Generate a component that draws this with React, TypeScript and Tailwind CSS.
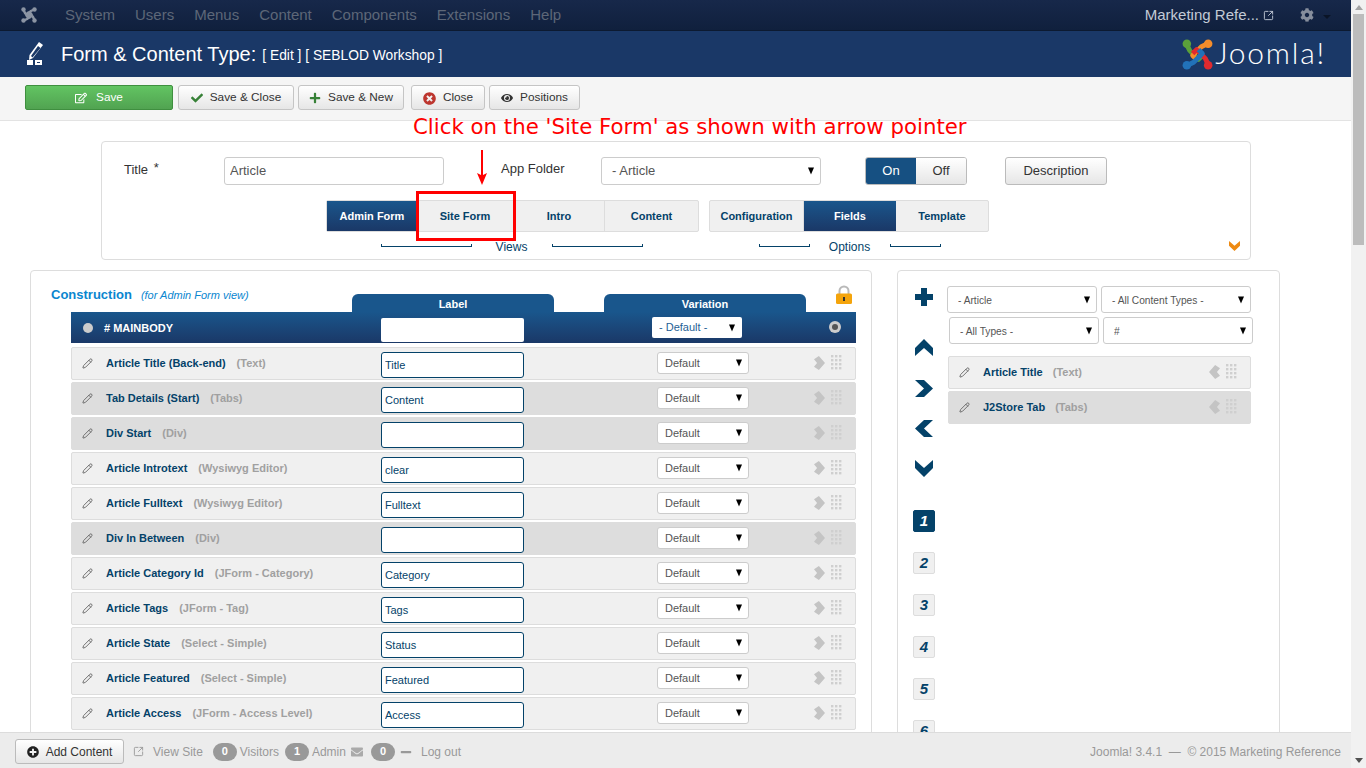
import type { ReactNode } from 'react';
import { FaCheck, FaCog, FaEnvelope, FaEye, FaMinus, FaPlus, FaPlusCircle, FaRegEdit, FaTimesCircle } from 'react-icons/fa';
import { LuPencil, LuSquareArrowOutUpRight } from 'react-icons/lu';

const menu = ['System', 'Users', 'Menus', 'Content', 'Components', 'Extensions', 'Help'];

const rows = [
    { name: 'Article Title (Back-end)', type: '(Text)', label: 'Title' },
    { name: 'Tab Details (Start)', type: '(Tabs)', label: 'Content', dark: true },
    { name: 'Div Start', type: '(Div)', label: '', dark: true },
    { name: 'Article Introtext', type: '(Wysiwyg Editor)', label: 'clear' },
    { name: 'Article Fulltext', type: '(Wysiwyg Editor)', label: 'Fulltext' },
    { name: 'Div In Between', type: '(Div)', label: '', dark: true },
    { name: 'Article Category Id', type: '(JForm - Category)', label: 'Category' },
    { name: 'Article Tags', type: '(JForm - Tag)', label: 'Tags' },
    { name: 'Article State', type: '(Select - Simple)', label: 'Status' },
    { name: 'Article Featured', type: '(Select - Simple)', label: 'Featured' },
    { name: 'Article Access', type: '(JForm - Access Level)', label: 'Access' },
];

function JoomlaMark({ size, colors }: { size: number; colors: string[] }) {
    const [green, orange, red, blue] = colors;
    return (
        <svg width={size} height={size} viewBox="0 0 32 32" fill="none" strokeWidth="5" strokeLinejoin="round">
            <path d="M4 4 L8 12 L17 21 L21 17" stroke={green} />
            <circle cx="5" cy="5" r="4.4" fill={green} />
            <path d="M28 4 L20 8 L11 17 L15 21" stroke={orange} />
            <circle cx="27" cy="5" r="4.4" fill={orange} />
            <path d="M28 28 L24 20 L15 11 L11 15" stroke={red} />
            <circle cx="27" cy="27" r="4.4" fill={red} />
            <path d="M4 28 L12 24 L21 15 L17 11" stroke={blue} />
            <circle cx="5" cy="27" r="4.4" fill={blue} />
        </svg>
    );
}

function Chevron({ dir, className }: { dir: 'up' | 'down' | 'left' | 'right'; className: string }) {
    const points = {
        up: '9,0 18,9 18,17 9,9 0,17 0,9',
        down: '9,17 18,8 18,0 9,8 0,0 0,8',
        left: '0,8.5 9,0 18,0 9,8.5 18,17 9,17',
        right: '18,8.5 9,0 0,0 9,8.5 0,17 9,17',
    }[dir];
    return (
        <svg className={className} viewBox="0 0 18 17" preserveAspectRatio="none" fill="currentColor">
            <polygon points={points} />
        </svg>
    );
}

function MoveArrow({ dir, className }: { dir: 'left' | 'right'; className: string }) {
    const points = dir === 'right' ? '18,8.5 8,0 0,4 5,8.5 0,13 8,17' : '0,8.5 10,0 18,4 13,8.5 18,13 10,17';
    return (
        <svg className={className} viewBox="0 0 18 17" preserveAspectRatio="none" fill="#c4c4c4">
            <polygon points={points} />
        </svg>
    );
}

function Select({ value, className, selectClassName }: { value: string; className: string; selectClassName: string }) {
    return (
        <div className={`relative shrink-0 ${className}`}>
            <select className={`block w-full appearance-none bg-white ${selectClassName}`}>
                <option>{value}</option>
            </select>
            <span className="pointer-events-none absolute right-[7px] top-1/2 h-0 w-0 -translate-y-1/2 border-x-[3.5px] border-t-[7px] border-x-transparent border-t-black" />
        </div>
    );
}

function ToolButton({ icon, children, className = '' }: { icon: ReactNode; children: ReactNode; className?: string }) {
    return (
        <button
            type="button"
            className={`flex h-[25px] items-center justify-center gap-[7px] rounded-[3px] border border-[#c5c5c5] bg-gradient-to-b from-white to-[#e6e6e6] pt-[1px] text-[11.8px] text-[#333] ${className}`}
        >
            {icon}
            {children}
        </button>
    );
}

function Bracket({ width }: { width: string }) {
    return <div className={`mb-[3px] h-[3px] border-x border-b border-[#044269] ${width}`} />;
}

function TabItem({ active, width, children }: { active?: boolean; width: string; children: ReactNode }) {
    return (
        <div
            className={`flex h-full items-center justify-center text-[11px] font-bold ${width} ${
                active ? 'bg-gradient-to-b from-[#19568c] to-[#1a3867] text-white' : 'border-r border-[#ddd] text-[#044269] last:border-r-0'
            }`}
        >
            {children}
        </div>
    );
}

function GripDots() {
    const dots = [];
    for (let y = 0; y < 4; y++) {
        for (let x = 0; x < 3; x++) {
            dots.push(<rect key={`${x}-${y}`} x={x * 4} y={y * 4} width="2.4" height="2.4" fill="#cfcfcf" />);
        }
    }
    return (
        <svg width="11" height="15" viewBox="0 0 11 15">
            {dots}
        </svg>
    );
}

function FieldRow({ name, type, label, dark }: { name: string; type: string; label: string; dark?: boolean }) {
    return (
        <div className={`mb-[2px] flex h-[33px] w-[785px] items-center rounded-[2px] border border-[#ddd] ${dark ? 'bg-[#dddddd]' : 'bg-[#f0f0f0]'}`}>
            <div className="flex w-[309px] items-center whitespace-nowrap text-[11px] font-bold">
                <LuPencil className="ml-[10px] h-[11px] w-[11px] text-[#666]" />
                <span className="ml-[13px] text-[#044269]">{name}</span>
                <span className="ml-[11px] text-[#a0a0a0]">{type}</span>
            </div>
            <input
                readOnly
                value={label}
                className="mt-[2px] h-[26px] w-[143px] rounded-[3px] border border-[#044269] bg-white px-[3px] text-[11px] text-[#044269] outline-none"
            />
            <Select
                value="Default"
                className="mb-[1px] ml-[133px] w-[92px]"
                selectClassName="h-[22px] rounded-[3px] border border-[#ccc] pl-[7px] text-[11px] text-[#555]"
            />
            <MoveArrow dir="right" className="mb-[1px] ml-[65px] h-[14px] w-[11px]" />
            <div className="mb-[2px] ml-[6px]">
                <GripDots />
            </div>
        </div>
    );
}

function LibraryItem({ name, type, dark }: { name: string; type: string; dark?: boolean }) {
    return (
        <div className={`mb-[2px] flex h-[33px] w-[303px] items-center rounded-[2px] border border-[#ddd] ${dark ? 'bg-[#dddddd]' : 'bg-[#f0f0f0]'}`}>
            <LuPencil className="ml-[10px] h-[11px] w-[11px] text-[#666]" />
            <span className="ml-[13px] whitespace-nowrap text-[11px] font-bold text-[#044269]">{name}</span>
            <span className="ml-[10px] whitespace-nowrap text-[11px] font-bold text-[#a0a0a0]">{type}</span>
            <MoveArrow dir="left" className="mb-[1px] ml-auto h-[14px] w-[11px]" />
            <div className="mb-[2px] ml-[6px] mr-[13px]">
                <GripDots />
            </div>
        </div>
    );
}

function FilterSelect({ value }: { value: string }) {
    return (
        <Select
            value={value}
            className="w-[150px]"
            selectClassName="h-[27px] rounded-[3px] border border-[#ccc] pl-[10px] pt-[2px] text-[10.2px] text-[#555]"
        />
    );
}

function Badge({ children }: { children: ReactNode }) {
    return (
        <span className="flex h-[18px] w-[24px] items-center justify-center rounded-full bg-[#999] text-[11px] font-bold text-white">{children}</span>
    );
}

export default function App() {
    return (
        <div className="relative flex h-screen w-[1366px] overflow-hidden bg-white font-['Liberation_Sans',Arial,sans-serif]">
            <div className="flex min-w-0 flex-1 flex-col">
                <div className="flex h-[31px] shrink-0 items-center border-b border-[#0c1a31] bg-gradient-to-b from-[#17284a] to-[#10203d]">
                    <div className="mb-[1px] ml-[21px] mr-[28px]">
                        <JoomlaMark size={16} colors={['#8b94a3', '#8b94a3', '#8b94a3', '#8b94a3']} />
                    </div>
                    <div className="flex gap-[20px] pt-[1px] text-[15px] text-[#5d6778]">
                        {menu.map((item) => (
                            <span key={item}>{item}</span>
                        ))}
                    </div>
                    <div className="ml-auto flex items-center pt-[1px] text-[15px] text-[#c3cbd6]">
                        <span>Marketing Refe...</span>
                        <LuSquareArrowOutUpRight className="ml-[4px] h-[11px] w-[11px]" />
                        <FaCog className="mb-[2px] ml-[26px] h-[14px] w-[14px] text-[#868e9c]" />
                        <span className="ml-[9px] mr-[20px] mt-[2px] h-0 w-0 border-x-[4px] border-t-[4px] border-x-transparent border-t-[#0a1426]" />
                    </div>
                </div>

                <div className="flex h-[46px] shrink-0 items-center bg-[#1a3867]">
                    <svg className="ml-[26px] mr-[17px]" width="18" height="24" viewBox="0 0 18 24" fill="white">
                        <path d="M13 0 L17 3 L7 16 L3 18 L3.5 13 Z" />
                        <path d="M12 4 L14.5 6 L6.5 15.5 L5 14 Z" fill="#1a3867" />
                        <rect x="1" y="18" width="6" height="5" />
                        <rect x="9" y="18" width="7" height="5" />
                        <rect x="11" y="20" width="3" height="1" fill="#1a3867" />
                    </svg>
                    <span className="whitespace-nowrap text-[20px] text-white">Form &amp; Content Type:</span>
                    <span className="ml-[6px] mt-[5px] whitespace-nowrap text-[13.8px] text-white">[ Edit ] [ SEBLOD Workshop ]</span>
                    <div className="ml-auto mr-[25px] flex items-center">
                        <JoomlaMark size={31} colors={['#5ba13a', '#f58d2b', '#e12a2f', '#2272b9']} />
                        <span className="mb-[4px] ml-[2px] font-['Lato',sans-serif] text-[30px] font-light leading-none tracking-[1.8px] text-white">Joomla!</span>
                    </div>
                </div>

                <div className="flex h-[44px] shrink-0 items-start border-b border-[#e3e3e3] bg-[#f5f5f5] pl-[25px] pt-[8px]">
                    <button
                        type="button"
                        className="flex h-[25px] w-[148px] items-center justify-center gap-[9px] rounded-[2px] border border-[#3f8f3f] bg-gradient-to-b from-[#62c462] to-[#51a351] pt-[1px] text-[11.8px] text-white"
                    >
                        <FaRegEdit className="h-[12px] w-[12px]" />
                        Save
                    </button>
                    <ToolButton className="ml-[5px] w-[116px]" icon={<FaCheck className="h-[12px] w-[12px] text-[#378137]" />}>
                        Save &amp; Close
                    </ToolButton>
                    <ToolButton className="ml-[4px] w-[106px]" icon={<FaPlus className="h-[12px] w-[12px] text-[#378137]" />}>
                        Save &amp; New
                    </ToolButton>
                    <ToolButton className="ml-[7px] w-[74px]" icon={<FaTimesCircle className="h-[13px] w-[13px] text-[#bd362f]" />}>
                        Close
                    </ToolButton>
                    <ToolButton className="ml-[4px] w-[91px]" icon={<FaEye className="h-[12px] w-[12px] text-[#333]" />}>
                        Positions
                    </ToolButton>
                </div>

                <div className="min-h-0 flex-1 overflow-hidden">
                    <div className="relative ml-[101px] mt-[20px] h-[119px] w-[1150px] rounded-[4px] border border-[#ddd]">
                        <div className="mt-[15px] flex h-[28px] items-center">
                            <span className="mb-[3px] ml-[22px] w-[100px] text-[13px] text-[#333]">
                                Title <span className="relative -top-[2px] ml-[2px]">*</span>
                            </span>
                            <input
                                readOnly
                                value="Article"
                                className="h-[28px] w-[220px] rounded-[3px] border border-[#ccc] bg-white px-[5px] pb-[1px] text-[13px] text-[#555] outline-none"
                            />
                            <span className="mb-[4px] ml-[57px] w-[100px] text-[13px] text-[#333]">App Folder</span>
                            <Select
                                value="- Article"
                                className="w-[220px]"
                                selectClassName="h-[28px] rounded-[3px] border border-[#ccc] pl-[10px] text-[13px] text-[#555]"
                            />
                            <div className="ml-[44px] flex h-[28px] w-[102px] overflow-hidden rounded-[3px] border border-[#bbb] text-[13px]">
                                <span className="flex w-[50px] items-center justify-center bg-[#165082] text-white">On</span>
                                <span className="flex flex-1 items-center justify-center bg-gradient-to-b from-white to-[#e6e6e6] text-[#333]">Off</span>
                            </div>
                            <button
                                type="button"
                                className="ml-[38px] h-[28px] w-[102px] rounded-[3px] border border-[#bbb] bg-gradient-to-b from-white to-[#e6e6e6] text-[13px] text-[#333]"
                            >
                                Description
                            </button>
                        </div>
                        <div className="ml-[224px] mt-[15px] flex gap-[10px]">
                            <div className="w-[373px]">
                                <div className="flex h-[32px] rounded-[2px] border border-[#ddd] bg-[#f0f0f0]">
                                    <TabItem active width="w-[90px]">Admin Form</TabItem>
                                    <TabItem width="w-[97px]">Site Form</TabItem>
                                    <TabItem width="w-[91px]">Intro</TabItem>
                                    <TabItem width="w-[93px]">Content</TabItem>
                                </div>
                                <div className="mt-[7px] flex items-center justify-center pr-[2px]">
                                    <Bracket width="w-[91px]" />
                                    <span className="w-[80px] pt-[1px] text-center text-[12px] leading-[14px] text-[#044269]">Views</span>
                                    <Bracket width="w-[91px]" />
                                </div>
                            </div>
                            <div className="w-[280px]">
                                <div className="flex h-[32px] rounded-[2px] border border-[#ddd] bg-[#f0f0f0]">
                                    <TabItem width="w-[94px]">Configuration</TabItem>
                                    <TabItem active width="w-[92px]">Fields</TabItem>
                                    <TabItem width="w-[92px]">Template</TabItem>
                                </div>
                                <div className="mt-[7px] flex items-center justify-center pl-[1px]">
                                    <Bracket width="w-[51px]" />
                                    <span className="w-[80px] pt-[1px] text-center text-[12px] leading-[14px] text-[#044269]">Options</span>
                                    <Bracket width="w-[51px]" />
                                </div>
                            </div>
                        </div>
                        <Chevron dir="down" className="absolute bottom-[8px] right-[10px] h-[10px] w-[11px] text-[#ee8a12]" />
                    </div>

                    <div className="ml-[30px] mt-[10px] flex gap-[25px]">
                        <div className="h-[520px] w-[842px] rounded-[4px] border border-[#ddd]">
                            <div className="flex h-[41px] items-end">
                                <div className="mb-[6px] ml-[20px] w-[301px] whitespace-nowrap">
                                    <span className="text-[13px] font-bold text-[#0a86cf]">Construction</span>
                                    <span className="ml-[9px] text-[11px] italic text-[#0a86cf]">(for Admin Form view)</span>
                                </div>
                                <div className="flex h-[18px] w-[202px] items-center justify-center rounded-t-[6px] bg-[#19568c] pt-[2px] text-[11px] font-bold text-white">Label</div>
                                <div className="ml-[50px] flex h-[18px] w-[202px] items-center justify-center rounded-t-[6px] bg-[#19568c] pt-[2px] text-[11px] font-bold text-white">Variation</div>
                                <svg className="mb-[7px] ml-[29px]" width="18" height="20" viewBox="0 0 18 20">
                                    <path d="M4.5 9 V6 a4.5 4.5 0 0 1 9 0 V9" fill="none" stroke="#b9b9b9" strokeWidth="2" />
                                    <rect x="1" y="8.5" width="16" height="10.5" rx="1.5" fill="#f4a40c" />
                                    <rect x="8" y="12" width="2" height="4" fill="#333" />
                                </svg>
                            </div>
                            <div className="ml-[40px] flex h-[31px] w-[785px] items-center bg-gradient-to-b from-[#19568c] to-[#1a3867]">
                                <span className="ml-[12px] h-[10px] w-[10px] rounded-full bg-[#ccc]" />
                                <span className="ml-[11px] w-[277px] pt-[2px] text-[11px] font-bold text-white"># MAINBODY</span>
                                <input readOnly className="mt-[5px] h-[24px] w-[143px] rounded-[2px] bg-white outline-none" />
                                <Select
                                    value="- Default -"
                                    className="ml-[128px] w-[90px]"
                                    selectClassName="h-[21px] rounded-[2px] pl-[7px] text-[11px] text-[#1f5f95]"
                                />
                                <span className="mb-[1px] ml-[87px] flex h-[12px] w-[12px] items-center justify-center rounded-full bg-[#ccc]">
                                    <span className="h-[6px] w-[6px] rounded-full bg-[#555]" />
                                </span>
                            </div>
                            <div className="ml-[40px] mt-[4px]">
                                {rows.map((row) => (
                                    <FieldRow key={row.name} {...row} />
                                ))}
                            </div>
                        </div>

                        <div className="flex h-[520px] w-[383px] rounded-[4px] border border-[#ddd]">
                            <div className="ml-[15px] flex w-[22px] flex-col items-center pt-[17px] text-[#044269]">
                                <svg width="18" height="18" viewBox="0 0 18 18" fill="currentColor">
                                    <polygon points="6,0 12,0 12,6 18,6 18,12 12,12 12,18 6,18 6,12 0,12 0,6 6,6" />
                                </svg>
                                <Chevron dir="up" className="mt-[33px] h-[17px] w-[18px] shrink-0" />
                                <Chevron dir="right" className="mt-[24px] h-[17px] w-[18px] shrink-0" />
                                <Chevron dir="left" className="mt-[23px] h-[17px] w-[18px] shrink-0" />
                                <Chevron dir="down" className="mt-[23px] h-[17px] w-[18px] shrink-0" />
                                {[1, 2, 3, 4, 5, 6].map((n) => (
                                    <div
                                        key={n}
                                        className={`flex h-[22px] w-[22px] shrink-0 items-center justify-center rounded-[2px] border text-[15px] font-bold italic ${
                                            n === 1 ? 'mt-[33px] border-[#044269] bg-[#044269] text-white' : 'mt-[20px] border-[#ddd] bg-[#f0f0f0] text-[#044269]'
                                        }`}
                                    >
                                        {n}
                                    </div>
                                ))}
                            </div>
                            <div className="ml-[12px] pt-[15px]">
                                <div className="flex gap-[4px]">
                                    <FilterSelect value="- Article" />
                                    <FilterSelect value="- All Content Types -" />
                                </div>
                                <div className="ml-[2px] mt-[4px] flex gap-[4px]">
                                    <FilterSelect value="- All Types -" />
                                    <FilterSelect value="#" />
                                </div>
                                <div className="ml-[1px] mt-[12px]">
                                    <LibraryItem name="Article Title" type="(Text)" />
                                    <LibraryItem name="J2Store Tab" type="(Tabs)" dark />
                                </div>
                            </div>
                        </div>
                    </div>
                </div>

                <div className="flex h-[36px] shrink-0 items-center border-t border-[#dcdcdc] bg-[#ececec] pt-[2px] text-[12px] text-[#999]">
                    <button
                        type="button"
                        className="ml-[15px] flex h-[25px] w-[109px] items-center justify-center gap-[7px] rounded-[3px] border border-[#bbb] bg-gradient-to-b from-white to-[#e6e6e6] text-[#333]"
                    >
                        <FaPlusCircle className="h-[12px] w-[12px] text-[#222]" />
                        Add Content
                    </button>
                    <LuSquareArrowOutUpRight className="ml-[9px] h-[11px] w-[11px]" />
                    <span className="ml-[9px]">View Site</span>
                    <span className="ml-[10px]"><Badge>0</Badge></span>
                    <span className="ml-[3px]">Visitors</span>
                    <span className="ml-[6px]"><Badge>1</Badge></span>
                    <span className="ml-[3px]">Admin</span>
                    <FaEnvelope className="ml-[5px] h-[12px] w-[12px] text-[#aaa]" />
                    <span className="ml-[8px]"><Badge>0</Badge></span>
                    <FaMinus className="ml-[5px] h-[12px] w-[12px]" />
                    <span className="ml-[9px]">Log out</span>
                    <span className="ml-auto mr-[10px]">Joomla! 3.4.1 &nbsp;— &nbsp;© 2015 Marketing Reference</span>
                </div>
            </div>

            <div className="flex w-[15px] shrink-0 flex-col items-center bg-[#f1f1f1]">
                <span className="mt-[5px] h-0 w-0 border-x-[4px] border-b-[5px] border-x-transparent border-b-[#a3a3a3]" />
                <div className="mt-[4px] h-[231px] w-[11px] bg-[#bcbcbc]" />
                <span className="mb-[5px] mt-auto h-0 w-0 border-x-[4px] border-t-[5px] border-x-transparent border-t-[#505050]" />
            </div>

            {/* tutorial annotations drawn on top of the screenshot */}
            <span className="absolute left-[413px] top-[114px] whitespace-nowrap font-['DejaVu_Sans',sans-serif] text-[21.3px] leading-[26px] text-[#f00]">
                Click on the 'Site Form' as shown with arrow pointer
            </span>
            <svg className="absolute left-[476px] top-[150px]" width="12" height="36" viewBox="0 0 12 36">
                <path d="M5 0 H7 V25 L11 23 L6 35 L1 23 L5 25 Z" fill="#f00" />
            </svg>
            <div className="absolute left-[416px] top-[191px] h-[50px] w-[100px] border-[3px] border-[#f00]" />
        </div>
    );
}
